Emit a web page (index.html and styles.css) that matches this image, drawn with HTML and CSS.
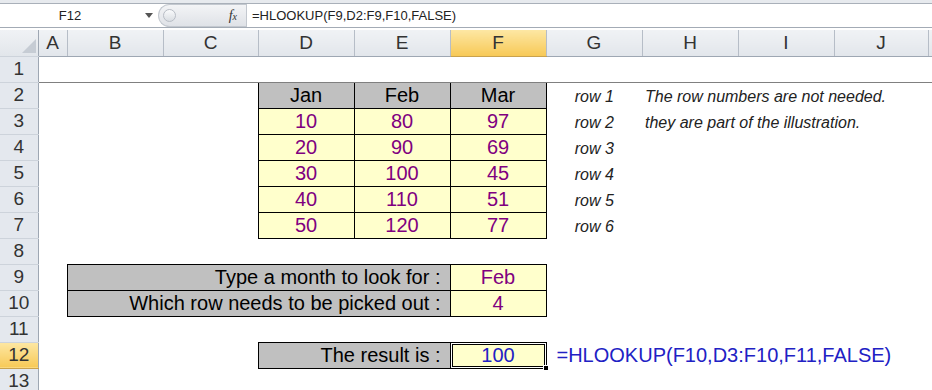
FILE: index.html
```html
<!DOCTYPE html>
<html lang="en">
<head>
    <meta charset="UTF-8">
    <meta name="viewport" content="width=device-width, initial-scale=1.0">
    <title>HLOOKUP example</title>
    <link rel="stylesheet" href="styles.css">
</head>
<body>
    <div class="ribbon-edge"></div>

    <div class="formula-bar">
        <div class="name-box">
            <span class="cell-ref">F12</span>
            <svg class="drop" width="8" height="5" viewBox="0 0 8 5"><polygon points="0,0 8,0 4,5" fill="#555"/></svg>
        </div>
        <div class="fx-area">
            <span class="knob"></span>
            <span class="fx"><i>f</i><small>x</small></span>
        </div>
        <div class="formula-input">=HLOOKUP(F9,D2:F9,F10,FALSE)</div>
    </div>

    <table class="sheet">
        <colgroup>
            <col class="c-head">
            <col class="c-a">
            <col class="c-wide">
            <col class="c-c">
            <col class="c-wide">
            <col class="c-wide">
            <col class="c-wide">
            <col class="c-wide">
            <col class="c-wide">
            <col class="c-wide">
            <col class="c-j">
            <col class="c-k">
        </colgroup>
        <tr class="col-heads">
            <th class="corner"><svg width="14" height="14" viewBox="0 0 14 14"><polygon points="14,0 14,14 0,14" fill="#c6ccd4"/></svg></th>
            <th>A</th><th>B</th><th>C</th><th>D</th><th>E</th>
            <th class="sel">F</th>
            <th>G</th><th>H</th><th>I</th><th>J</th><th></th>
        </tr>
        <tr class="r1">
            <th>1</th><td></td><td></td><td></td><td></td><td></td><td></td><td></td><td></td><td></td><td></td><td></td>
        </tr>
        <tr>
            <th>2</th><td></td><td></td><td></td>
            <td class="box hd">Jan</td><td class="box hd">Feb</td><td class="box hd">Mar</td>
            <td class="row-note">row 1</td><td class="note">The row numbers are not needed.</td><td></td><td></td><td></td>
        </tr>
        <tr>
            <th>3</th><td></td><td></td><td></td>
            <td class="box val">10</td><td class="box val">80</td><td class="box val">97</td>
            <td class="row-note">row 2</td><td class="note">they are part of the illustration.</td><td></td><td></td><td></td>
        </tr>
        <tr>
            <th>4</th><td></td><td></td><td></td>
            <td class="box val">20</td><td class="box val">90</td><td class="box val">69</td>
            <td class="row-note">row 3</td><td></td><td></td><td></td><td></td>
        </tr>
        <tr>
            <th>5</th><td></td><td></td><td></td>
            <td class="box val">30</td><td class="box val">100</td><td class="box val">45</td>
            <td class="row-note">row 4</td><td></td><td></td><td></td><td></td>
        </tr>
        <tr>
            <th>6</th><td></td><td></td><td></td>
            <td class="box val">40</td><td class="box val">110</td><td class="box val">51</td>
            <td class="row-note">row 5</td><td></td><td></td><td></td><td></td>
        </tr>
        <tr>
            <th>7</th><td></td><td></td><td></td>
            <td class="box val">50</td><td class="box val">120</td><td class="box val">77</td>
            <td class="row-note">row 6</td><td></td><td></td><td></td><td></td>
        </tr>
        <tr>
            <th>8</th><td></td><td></td><td></td><td></td><td></td><td></td><td></td><td></td><td></td><td></td><td></td>
        </tr>
        <tr>
            <th>9</th><td></td>
            <td class="box label" colspan="4">Type a month to look for :</td>
            <td class="box val">Feb</td>
            <td></td><td></td><td></td><td></td><td></td>
        </tr>
        <tr>
            <th>10</th><td></td>
            <td class="box label" colspan="4">Which row needs to be picked out :</td>
            <td class="box val">4</td>
            <td></td><td></td><td></td><td></td><td></td>
        </tr>
        <tr>
            <th>11</th><td></td><td></td><td></td><td></td><td></td><td></td><td></td><td></td><td></td><td></td><td></td>
        </tr>
        <tr>
            <th class="sel">12</th><td></td><td></td><td></td>
            <td class="box label" colspan="2">The result is :</td>
            <td class="box val result">100</td>
            <td class="formula-text">=HLOOKUP(F10,D3:F10,F11,FALSE)</td>
            <td></td><td></td><td></td><td></td>
        </tr>
        <tr>
            <th>13</th><td></td><td></td><td></td><td></td><td></td><td></td><td></td><td></td><td></td><td></td><td></td>
        </tr>
    </table>
</body>
</html>
```

FILE: styles.css
```css
body {
    margin: 0;
    background-color: #fff;
    font-family: "Liberation Sans", Arial, sans-serif;
    color: #000;
    overflow: hidden;
}

/* Formula bar */
.ribbon-edge {
    height: 3px;
    background-color: #e7eaee;
    border-bottom: 1px solid #a9b0b9;
}
.formula-bar {
    display: flex;
    height: 23px;
    border-bottom: 1px solid #a3abb5;
    font-size: 13px;
    color: #222;
}
.name-box {
    width: 155px;
    display: flex;
    align-items: center;
}
.cell-ref {
    width: 140px;
    text-align: center;
}
.drop {
    margin-left: 5px;
}
.fx-area {
    width: 88px;
    margin-left: 3px;
    display: flex;
    align-items: center;
    justify-content: space-between;
    background: linear-gradient(#f3f4f6, #dfe2e7);
    border: 1px solid #c3c8cf;
    border-right: none;
    border-radius: 12px 0 0 12px;
    box-sizing: border-box;
}
.knob {
    width: 11px;
    height: 11px;
    margin-left: 4px;
    border-radius: 50%;
    border: 1px solid #b8bdc5;
    background: linear-gradient(#fafbfc, #d9dde2);
}
.fx {
    margin-right: 9px;
    font-family: "Liberation Serif", "Times New Roman", serif;
    font-size: 14px;
    color: #333;
}
.fx small {
    font-size: 10px;
    font-style: italic;
}
.formula-input {
    flex: 1;
    padding-left: 5px;
    line-height: 23px;
    border-left: 1px solid #c3c8cf;
}

/* Sheet grid */
.sheet {
    margin-top: 2px;
    border-collapse: collapse;
    table-layout: fixed;
    width: 932px;
}
.c-head { width: 38px; }
.c-a { width: 29px; }
.c-wide { width: 96px; }
.c-c { width: 95px; }
.c-j { width: 94px; }
.c-k { width: 4px; }

.sheet tr {
    height: 26px;
}
.sheet th {
    padding: 0;
    font-weight: normal;
    font-size: 19px;
    color: #333;
    text-align: center;
}
.col-heads th {
    background: linear-gradient(#f0f2f5, #e2e6eb);
    border-right: 1px solid #b6bdc7;
    border-bottom: 1px solid #9ea7b3;
}
.col-heads th.corner {
    text-align: right;
    vertical-align: bottom;
    line-height: 0;
    padding: 0 2px 3px 0;
}
.sheet tr > th:first-child {
    background-color: #e4e8ee;
    border-right: 1px solid #9ea7b3;
    border-bottom: 1px solid #cdd3db;
}
.sheet th.sel,
.sheet tr > th.sel:first-child {
    background: linear-gradient(#fde7a3, #f7c957);
    border-bottom-color: #c9a24e;
}
.sheet td {
    padding: 0 3px;
    font-size: 20px;
    line-height: 24px;
    white-space: nowrap;
    overflow: visible;
}
.r1 td {
    border-bottom: 1px solid #808080;
}

/* Bordered cells */
.sheet td.box {
    border: 1px solid #000;
}
.sheet td.hd {
    background-color: #c0c0c0;
    text-align: center;
}
.sheet td.val {
    background-color: #ffffcc;
    color: #800080;
    text-align: center;
}
.sheet td.label {
    background-color: #c0c0c0;
    text-align: right;
    padding-right: 9px;
}
.sheet td.result {
    position: relative;
    color: #2121c4;
    box-shadow: inset 0 0 0 1px #fff, inset 0 0 0 2px #000;
}
.result::after {
    content: "";
    position: absolute;
    right: -3px;
    bottom: -3px;
    width: 4px;
    height: 4px;
    background-color: #000;
    border: 1px solid #fff;
}
.sheet td.formula-text {
    color: #2121c4;
    padding-left: 10px;
}

/* Notes beside the table, bottom aligned like Excel */
.sheet td.row-note,
.sheet td.note {
    font-style: italic;
    font-size: 16px;
    line-height: 20px;
    vertical-align: bottom;
    padding-bottom: 1px;
    color: #222;
}
.sheet td.row-note {
    text-align: center;
}
```
